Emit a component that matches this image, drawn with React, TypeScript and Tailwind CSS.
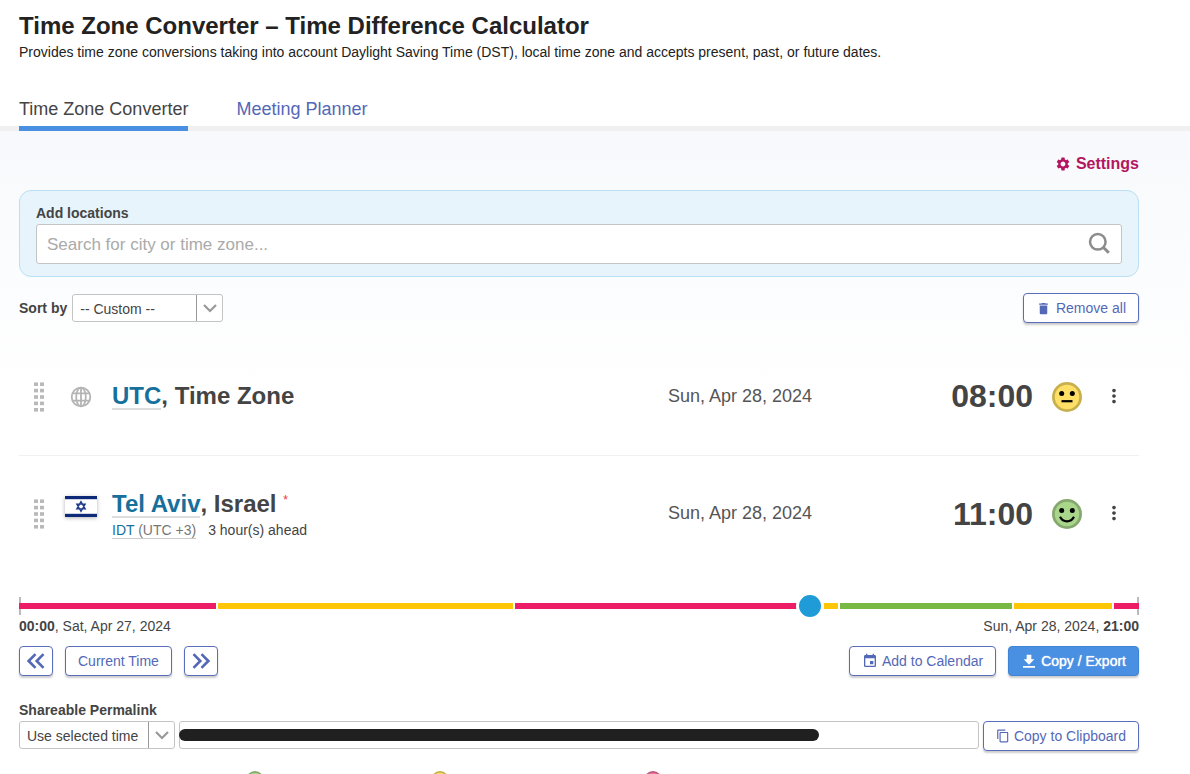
import type { ReactNode } from "react";
import { MdContentCopy, MdDelete, MdEvent, MdMoreVert, MdSettings } from "react-icons/md";

type Mood = "neutral" | "happy" | "sad";

const faceColors: Record<Mood, { fill: string; ring: string }> = {
  neutral: { fill: "#ffdf66", ring: "#c9b04f" },
  happy: { fill: "#a9d68b", ring: "#86a86e" },
  sad: { fill: "#f272a0", ring: "#c05a80" },
};

function Face({ mood, className }: { mood: Mood; className: string }) {
  const { fill, ring } = faceColors[mood];
  return (
    <svg viewBox="0 0 30 30" className={className} aria-hidden="true">
      <circle cx="15" cy="15" r="13.6" fill={fill} stroke={ring} strokeWidth="2.8" />
      <circle cx="9.7" cy="11.4" r="2.5" fill="#000" />
      <circle cx="20.3" cy="11.4" r="2.5" fill="#000" />
      {mood === "neutral" && <path d="M9.5 19.2h11" stroke="#000" strokeWidth="2.2" />}
      {mood === "happy" && (
        <path d="M8 17.8c1.6 3 4.2 4.6 7 4.6s5.4-1.6 7-4.6" fill="none" stroke="#000" strokeWidth="2.2" />
      )}
      {mood === "sad" && (
        <path d="M8.5 22c1.6-2.8 4-4 6.5-4s4.900 1.2 6.5 4" fill="none" stroke="#000" strokeWidth="2.2" />
      )}
    </svg>
  );
}

function Grip() {
  return (
    <svg viewBox="0 0 10 30" className="h-[30px] w-[10px] shrink-0" fill="#b9b9b9" aria-hidden="true">
      {[0, 6.4, 12.8, 19.2, 25.6].map((y) => (
        <g key={y}>
          <rect x="0" y={y + 0.4} width="4" height="3.6" />
          <rect x="6" y={y + 0.4} width="4" height="3.6" />
        </g>
      ))}
    </svg>
  );
}

function Globe() {
  return (
    <svg viewBox="0 0 22 22" className="h-[22px] w-[22px]" fill="none" stroke="#b4b4b4" strokeWidth="1.8" aria-hidden="true">
      <circle cx="11" cy="11" r="9.3" />
      <ellipse cx="11" cy="11" rx="4.8" ry="9.3" />
      <path d="M11 1.6v18.8M2.6 7.4h16.8M2.6 14.6h16.8" />
    </svg>
  );
}

function IsraelFlag() {
  return (
    <svg viewBox="0 0 32 21" className="h-[21px] w-8 shadow-[0_1px_4px_rgba(0,0,0,0.3)]" aria-hidden="true">
      <rect width="32" height="21" fill="#fff" />
      <rect width="32" height="3.2" fill="#0c2a78" />
      <rect y="17.8" width="32" height="3.2" fill="#0c2a78" />
      <path
        d="M16 5.6l4.2 7.3h-8.4zM16 15.4l4.2-7.3h-8.4z"
        fill="none"
        stroke="#1d3a8a"
        strokeWidth="1.3"
      />
    </svg>
  );
}

function SearchIcon() {
  return (
    <svg viewBox="0 0 22 22" className="h-[22px] w-[22px]" fill="none" stroke="#8c8c8c" aria-hidden="true">
      <circle cx="9.8" cy="9.8" r="7.800" strokeWidth="2.500" />
      <path d="M15.2 15.2l5.600 5.600" strokeWidth="3" />
    </svg>
  );
}

function DoubleChevron({ flip = false }: { flip?: boolean }) {
  return (
    <svg viewBox="0 0 18 16" className="h-4 w-[18px]" fill="none" stroke="currentColor" strokeWidth="2.6" aria-hidden="true">
      {flip ? <path d="M1.5 1.2L8.3 8l-6.8 6.8M9.5 1.2L16.3 8l-6.8 6.8" /> : <path d="M8.5 1.2L1.7 8l6.8 6.8M16.5 1.2L9.7 8l6.8 6.8" />}
    </svg>
  );
}

function DownloadIcon() {
  return (
    <svg viewBox="0 0 24 24" className="h-4 w-4" fill="currentColor" aria-hidden="true">
      <path d="M20 9.5h-4.5V2.5h-7v7H4l8 8zM3 19.5V22h18v-2.5z" />
    </svg>
  );
}

function Dropdown({ id, label, className }: { id: string; label: string; className: string }) {
  return (
    <div className={`relative shrink-0 ${className}`}>
      <select
        id={id}
        className="h-7 w-full appearance-none rounded-[3px] border border-[#c4c4c4] bg-white pt-px pl-[7px] text-sm text-[#444]"
      >
        <option>{label}</option>
      </select>
      <span className="pointer-events-none absolute inset-y-px right-px flex w-[26px] items-center justify-center border-l border-[#999]">
        <svg viewBox="0 0 14 9" className="h-[9px] w-[14px]" fill="none" stroke="#999" strokeWidth="2.2" aria-hidden="true">
          <path d="M1 1l6 6 6-6" />
        </svg>
      </span>
    </div>
  );
}

function OutlineButton({ children, className, label }: { children: ReactNode; className: string; label?: string }) {
  return (
    <button
      type="button"
      aria-label={label}
      className={`flex h-[30px] shrink-0 items-center justify-center rounded border border-[#5a6dbb] bg-white text-sm text-[#5468b8] shadow-[0_2px_2px_rgba(0,0,0,0.2)] ${className}`}
    >
      {children}
    </button>
  );
}

interface ZoneRowProps {
  icon: ReactNode;
  name: ReactNode;
  date: string;
  time: string;
  mood: Mood;
  top?: boolean;
  className?: string;
}

function ZoneRow({ icon, name, date, time, mood, top = false, className = "" }: ZoneRowProps) {
  return (
    <li className={`flex h-[117px] items-center pr-[13px] pb-px pl-[15px] ${className}`}>
      <Grip />
      <div className="ml-5 flex flex-1 items-center gap-[15px]">
        <div className={`flex w-[33px] shrink-0 justify-center ${top ? "mt-[6px] self-start" : ""}`}>{icon}</div>
        <div>{name}</div>
      </div>
      <span className="w-36 pb-[2px] text-right text-lg whitespace-nowrap text-[#555]">{date}</span>
      <span className="w-[221px] pb-px text-right text-[32px] leading-9 font-bold text-[#444]">{time}</span>
      <Face mood={mood} className="ml-[19px] h-[30px] w-[30px] shrink-0" />
      <button type="button" aria-label="More options" className="ml-5 flex w-6 justify-center pb-[2px] text-[#444]">
        <MdMoreVert className="h-[22px] w-[22px]" />
      </button>
    </li>
  );
}

const segments = [
  "flex-8 bg-[#ed1c66]",
  "flex-12 bg-[#fdc707]",
  "flex-12 bg-[#ed1c66]",
  "flex-1 bg-[#fdc707]",
  "flex-7 bg-[#78b843]",
  "flex-4 bg-[#fdc707]",
  "flex-1 bg-[#ed1c66]",
];

export default function App() {
  return (
    <div className="bg-white font-['Liberation_Sans',Arial,sans-serif] text-sm text-[#444]">
      <header className="pt-[10px] pr-[51px] pl-[19px] text-[#222]">
        <h1 className="text-2xl leading-8 font-bold">Time Zone Converter – Time Difference Calculator</h1>
        <p className="leading-5">
          Provides time zone conversions taking into account Daylight Saving Time (DST), local time zone and accepts
          present, past, or future dates.
        </p>
      </header>

      <nav className="mt-[35px] flex gap-12 border-b-[5px] border-[#f0f0f0] pl-[19px] text-lg leading-6">
        <a href="#converter" aria-current="page" className="-mb-[5px] border-b-[5px] border-[#4a90e2] pb-[5px] text-[#444]">
          Time Zone Converter
        </a>
        <a href="#planner" className="text-[#5468b8]">
          Meeting Planner
        </a>
      </nav>

      <main className="bg-linear-to-b from-[#f7f9fc] to-white to-[260px] pt-[21px] pr-[51px] pl-[19px]">
        <div className="flex justify-end">
          <button type="button" className="flex items-center gap-[5px] text-base leading-6 font-bold text-[#b4155f]">
            <MdSettings className="h-4 w-4" />
            Settings
          </button>
        </div>

        <section className="mt-[14px] rounded-xl border border-[#b9e1f3] bg-[#e7f4fb] px-4 py-3">
          <label htmlFor="search" className="block leading-[21px] font-bold">
            Add locations
          </label>
          <div className="flex h-10 items-center rounded-[3px] border border-[#c4c4c4] bg-white pr-[11px] pl-[10px]">
            <input
              id="search"
              type="text"
              placeholder="Search for city or time zone..."
              className="h-full min-w-0 flex-1 bg-transparent pt-px text-[17px] outline-none placeholder:text-[#aaa]"
            />
            <button type="button" aria-label="Search" className="pb-[2px]">
              <SearchIcon />
            </button>
          </div>
        </section>

        <div className="mt-4 flex items-center justify-between">
          <div className="flex items-center gap-[5px]">
            <label htmlFor="sort" className="pb-px font-bold">
              Sort by
            </label>
            <Dropdown id="sort" label="-- Custom --" className="w-[151px]" />
          </div>
          <OutlineButton className="gap-[5px] px-3">
            <MdDelete className="h-[15px] w-[15px]" />
            Remove all
          </OutlineButton>
        </div>

        <ul className="mt-4">
          <ZoneRow
            className="border-b border-[#f0f0f0]"
            icon={<Globe />}
            name={
              <h2 className="pb-[2px] text-2xl leading-7 font-bold">
                <a href="#utc" className="inline-block border-b-2 border-[#ddd] leading-6 text-[#176f9b]">
                  UTC
                </a>
                , Time Zone
              </h2>
            }
            date="Sun, Apr 28, 2024"
            time="08:00"
            mood="neutral"
          />
          <ZoneRow
            top
            icon={<IsraelFlag />}
            name={
              <>
                <h2 className="pb-1 text-2xl leading-7 font-bold">
                  <a href="#tel-aviv" className="inline-block border-b-2 border-[#ddd] leading-6 text-[#176f9b]">
                    Tel Aviv
                  </a>
                  , Israel <sup className="-top-2 text-xs font-normal text-[#e33]">*</sup>
                </h2>
                <p className="flex gap-3">
                  <a href="#idt" className="border-b border-[#ccc] leading-4 text-[#777]">
                    <span className="text-[#176f9b]">IDT</span> (UTC +3)
                  </a>
                  <span className="leading-4">3 hour(s) ahead</span>
                </p>
              </>
            }
            date="Sun, Apr 28, 2024"
            time="11:00"
            mood="happy"
          />
        </ul>

        <div className="relative mt-6 flex h-[18px] items-center border-x-2 border-[#bbb]">
          <div className="-mx-[2px] flex h-[6px] flex-1 gap-[2px]">
            {segments.map((segment, index) => (
              <span key={index} className={segment} />
            ))}
          </div>
          <input
            type="range"
            aria-label="Selected hour"
            min={0}
            max={45}
            defaultValue={32}
            className="absolute -inset-x-[2px] -inset-y-[5px] appearance-none bg-transparent [&::-webkit-slider-thumb]:h-7 [&::-webkit-slider-thumb]:w-7 [&::-webkit-slider-thumb]:appearance-none [&::-webkit-slider-thumb]:rounded-full [&::-webkit-slider-thumb]:border-[3px] [&::-webkit-slider-thumb]:border-white [&::-webkit-slider-thumb]:bg-[#1f9bd8]"
          />
        </div>
        <div className="flex justify-between leading-[22px]">
          <span>
            <b>00:00</b>, Sat, Apr 27, 2024
          </span>
          <span>
            Sun, Apr 28, 2024, <b>21:00</b>
          </span>
        </div>

        <div className="mt-[9px] flex items-center justify-between">
          <div className="flex gap-3">
            <OutlineButton label="Back" className="w-[34px]">
              <DoubleChevron />
            </OutlineButton>
            <OutlineButton className="px-3">Current Time</OutlineButton>
            <OutlineButton label="Forward" className="w-[34px]">
              <DoubleChevron flip />
            </OutlineButton>
          </div>
          <div className="flex gap-3">
            <OutlineButton className="gap-1 px-3">
              <MdEvent className="h-4 w-4" />
              Add to Calendar
            </OutlineButton>
            <button
              type="button"
              className="flex h-[30px] items-center gap-1 rounded border border-[#3f83d4] bg-[#4a90e2] px-3 text-sm text-white shadow-[0_2px_2px_rgba(0,0,0,0.2)] [text-shadow:0_0_1px_#fff]"
            >
              <DownloadIcon />
              Copy / Export
            </button>
          </div>
        </div>

        <label htmlFor="link-mode" className="mt-6 block leading-[21px] font-bold">
          Shareable Permalink
        </label>
        <div className="flex items-start gap-1">
          <Dropdown id="link-mode" label="Use selected time" className="w-[156px]" />
          <div className="relative flex-1">
            <input
              type="text"
              readOnly
              aria-label="Permalink"
              className="block h-7 w-full rounded-[3px] border border-[#c4c4c4] bg-white px-2"
            />
            <span className="absolute top-2 left-0 h-3 w-[80%] rounded-full bg-[#202020]" />
          </div>
          <OutlineButton className="gap-1 px-3">
            <MdContentCopy className="h-[14px] w-[14px]" />
            Copy to Clipboard
          </OutlineButton>
        </div>

        <div className="mt-5 flex pl-[227px]">
          <Face mood="happy" className="mr-[167px] h-[18px] w-[18px]" />
          <Face mood="neutral" className="mr-[195px] h-[18px] w-[18px]" />
          <Face mood="sad" className="h-[18px] w-[18px]" />
        </div>
      </main>
    </div>
  );
}
